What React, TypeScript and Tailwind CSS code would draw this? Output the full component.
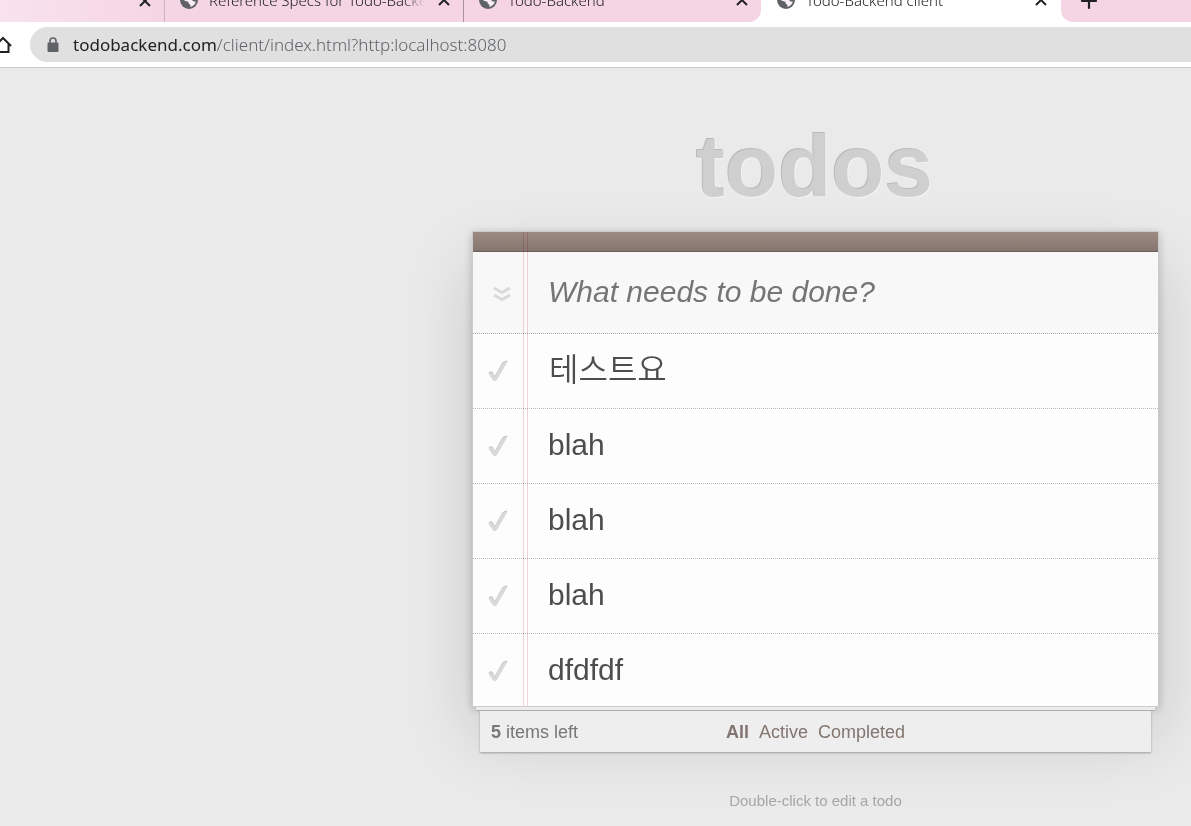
import { Plus } from 'lucide-react';

interface Tab {
  id: number;
  title: string;
  active?: boolean;
}

interface Todo {
  id: number;
  title: string;
  lang?: string;
}

const tabs: Tab[] = [
  { id: 1, title: 'Reference Specs for Todo-Backend' },
  { id: 2, title: 'Todo-Backend' },
  { id: 3, title: 'Todo-Backend client', active: true },
];

const todos: Todo[] = [
  { id: 1, title: '테스트요', lang: 'ko' },
  { id: 2, title: 'blah' },
  { id: 3, title: 'blah' },
  { id: 4, title: 'blah' },
  { id: 5, title: 'dfdfdf' },
];

function GlobeIcon() {
  return (
    <svg viewBox="0 0 18 18" className="size-[18px] shrink-0" aria-hidden="true">
      <circle cx="9" cy="9" r="9" fill="#5f6368" />
      <path d="M7 2.5L11.5 2.5L10.5 5L8 6.5V8.5H11.5L13.5 10.5H15.8C15.3 13.2 13.2 15.3 10.2 15.9L10.6 14L8.6 12.6V11L4.5 9.5L2.4 7.5C3 5 4.8 3.2 7 2.5Z" fill="#fbeef4" />
    </svg>
  );
}

function CloseButton({ label }: { label: string }) {
  return (
    <button aria-label={label} className="flex size-4 shrink-0 items-center justify-center">
      <svg viewBox="0 0 12 12" className="size-3" stroke="#202124" strokeWidth="2" fill="none">
        <path d="M1 1l10 10M11 1l-10 10" />
      </svg>
    </button>
  );
}

function CheckMark() {
  return (
    <svg viewBox="0 0 20 22" className="h-[22px] w-5" aria-hidden="true">
      <path d="M0.5 12.8L2.4 11.2Q4.2 11 5 12.6L6.8 16L14 3Q15.4 0.8 19.6 0.4L9.6 17.8Q8.2 20.4 6.6 20.2Q5.4 20.2 4.4 18.4Z" fill="#c4c4c4" />
      <path d="M0.5 13.8L2.4 12.2Q4.2 12 5 13.6L6.8 17L14 4Q15.4 1.8 19.6 1.4L9.6 18.8Q8.2 21.4 6.6 21.2Q5.4 21.2 4.4 19.4Z" fill="#d9d9d9" />
    </svg>
  );
}

function BrowserBar() {
  return (
    <div className="border-b border-[#c8cacc] bg-white font-['Noto_Sans','Noto_Sans_CJK_KR',sans-serif]">
      <div className="flex h-[22px] overflow-hidden text-[15px] font-light text-[#202124]">
        <div className="flex h-full w-[165px] shrink-0 items-start justify-end border-r border-[#c9b5be] bg-linear-to-r from-[#f8e3ec] to-[#f5d5e4] pr-[11px]">
          <div className="-mt-[7px]">
            <CloseButton label="Close tab" />
          </div>
        </div>
        <div className="flex shrink-0">
          {tabs.map((tab) => (
            <div
              key={tab.id}
              className={
                tab.active
                  ? 'flex h-full w-[300px] items-start bg-white pr-3 pl-4'
                  : 'flex h-full w-[299px] items-start border-[#a8939d] bg-[#f5d5e4] pr-[11px] pl-[15px] first:border-r nth-2:w-[297px] nth-2:rounded-br-xl'
              }
            >
              <div className="-mt-3 flex h-6 w-full items-center gap-[11px]">
                <GlobeIcon />
                <span className="min-w-0 flex-1 overflow-hidden mask-r-from-90% whitespace-nowrap">{tab.title}</span>
                <CloseButton label={`Close ${tab.title}`} />
              </div>
            </div>
          ))}
        </div>
        <div className="flex h-full flex-1 items-start rounded-bl-xl bg-[#f5d5e4] pl-4">
          <button aria-label="New tab" className="-mt-[11px]">
            <Plus size={24} strokeWidth={2.2} color="#202124" />
          </button>
        </div>
      </div>
      <div className="flex h-[45px] items-center overflow-hidden">
        <button aria-label="Home" className="-ml-[7px] shrink-0">
          <svg viewBox="0 0 20 20" className="size-5" fill="none" stroke="#202124" strokeWidth="2">
            <path d="M2 11L10 3L18 11M4.5 9V17H15.5V9" />
          </svg>
        </button>
        <div className="ml-[17px] flex h-[35px] flex-1 items-center gap-[14px] rounded-l-full bg-[#e0e0e0] pl-[17px]">
          <svg viewBox="0 0 12 16" className="h-4 w-3 shrink-0" aria-hidden="true">
            <path d="M3 7V4a3 3 0 0 1 6 0v3" fill="none" stroke="#5f6368" strokeWidth="1.6" />
            <rect x="0.5" y="5.5" width="11" height="9.5" rx="1.2" fill="#5f6368" />
          </svg>
          <p className="text-[17px] text-[#5f6368]">
            <span className="text-[#202124]">todobackend.com</span>
            <span className="font-light">/client/index.html?http:localhost:8080</span>
          </p>
        </div>
      </div>
    </div>
  );
}

function TodoItem({ todo }: { todo: Todo }) {
  return (
    <li className="flex h-[75px] items-center border-b border-dotted border-[#bbb] pb-[2px] last:h-[72px] last:border-b-0 last:pb-0">
      <label className="flex w-[54px] shrink-0 pt-[2px] pl-[15px]">
        <input type="checkbox" aria-label={todo.title} className="sr-only" />
        <CheckMark />
      </label>
      <span
        lang={todo.lang}
        className={
          todo.lang === 'ko'
            ? 'pl-[22px] text-[32px] leading-9 font-[350] text-[#4d4d4d]'
            : 'pl-[21px] text-[30px] leading-9 text-[#4d4d4d]'
        }
      >
        {todo.title}
      </span>
    </li>
  );
}

function TodoCard() {
  return (
    <section className="relative border border-[#ccc] bg-[#fdfdfd] shadow-[0_2px_8px_rgba(0,0,0,0.2),0_31px_63px_rgba(0,0,0,0.15)]">
      <div className="h-5 border-b border-[#6c615c] bg-linear-to-b from-[#9d8b82] to-[#85756e]" />
      <header className="flex h-[82px] items-center border-b border-dotted border-[#adadad] bg-[#f8f8f8] pb-[2px]">
        <label className="flex w-[54px] shrink-0 justify-center pt-[5px] pl-1">
          <input type="checkbox" aria-label="Mark all as complete" className="sr-only" />
          <svg viewBox="0 0 18 16" className="h-4 w-[18px]" fill="none" stroke="#d9d9d9" strokeWidth="3">
            <path d="M1 2L9 6.5L17 2M1 9L9 13.5L17 9" />
          </svg>
        </label>
        <input
          type="text"
          aria-label="New todo"
          placeholder="What needs to be done?"
          className="min-w-0 flex-1 bg-transparent pl-[21px] text-[30px] leading-9 outline-none placeholder:text-[#757575] placeholder:italic"
        />
      </header>
      <ul>
        {todos.map((todo) => (
          <TodoItem key={todo.id} todo={todo} />
        ))}
      </ul>
      <div className="pointer-events-none absolute inset-y-0 left-[50px] w-[5px] border-x border-[#f5d6d6] mix-blend-multiply" />
    </section>
  );
}

export default function App() {
  return (
    <div className="min-h-screen overflow-hidden bg-[#eaeaea] font-['Liberation_Sans','Noto_Sans_CJK_KR',sans-serif]">
      <BrowserBar />
      <main className="mr-8 ml-auto w-full max-w-[687px]">
        <h1 className="pt-[50px] pr-[2px] pb-[17px] text-center text-[87px] leading-24 font-bold text-[#cfcfcf] [text-shadow:-1px_-1px_0_#bababa,1px_1px_0_#f3f3f3]">
          todos
        </h1>
        <TodoCard />
        <div className="relative mx-1 h-1 border-b border-[#b0b0b0] bg-[#ececec]" />
        <footer className="relative mx-2 grid h-[41px] grid-cols-3 items-center bg-[#eeeeee] px-[11px] text-lg text-[#777] shadow-[0_1px_2px_rgba(0,0,0,0.3)]">
          <span>
            <strong>5</strong> items left
          </span>
          <nav className="flex justify-center gap-[10px] text-[#83756f]">
            <a href="#/" className="font-bold">All</a>
            <a href="#/active">Active</a>
            <a href="#/completed">Completed</a>
          </nav>
        </footer>
        <p className="pt-[38px] pb-3 text-center text-[15px] text-[#a6a6a6]">Double-click to edit a todo</p>
      </main>
    </div>
  );
}
